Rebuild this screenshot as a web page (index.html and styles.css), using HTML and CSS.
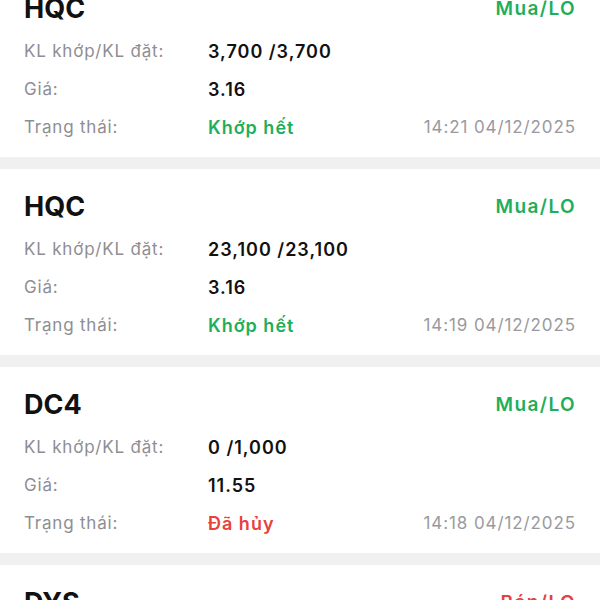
FILE: index.html
```html
<!DOCTYPE html>
<html lang="vi">
<head>
    <meta charset="UTF-8">
    <title>Sổ lệnh</title>
    <link rel="stylesheet" href="styles.css">
</head>
<body>
    <div id="orders">
        <div class="card">
            <div class="head">
                <span class="code">HQC</span>
                <span class="side buy">Mua/LO</span>
            </div>
            <div class="row">
                <span class="label">KL khớp/KL đặt:</span>
                <span class="value">3,700 /3,700</span>
            </div>
            <div class="row">
                <span class="label">Giá:</span>
                <span class="value">3.16</span>
            </div>
            <div class="row">
                <span class="label">Trạng thái:</span>
                <span class="value done">Khớp hết</span>
                <span class="time">14:21 04/12/2025</span>
            </div>
        </div>

        <div class="card">
            <div class="head">
                <span class="code">HQC</span>
                <span class="side buy">Mua/LO</span>
            </div>
            <div class="row">
                <span class="label">KL khớp/KL đặt:</span>
                <span class="value">23,100 /23,100</span>
            </div>
            <div class="row">
                <span class="label">Giá:</span>
                <span class="value">3.16</span>
            </div>
            <div class="row">
                <span class="label">Trạng thái:</span>
                <span class="value done">Khớp hết</span>
                <span class="time">14:19 04/12/2025</span>
            </div>
        </div>

        <div class="card">
            <div class="head">
                <span class="code">DC4</span>
                <span class="side buy">Mua/LO</span>
            </div>
            <div class="row">
                <span class="label">KL khớp/KL đặt:</span>
                <span class="value">0 /1,000</span>
            </div>
            <div class="row">
                <span class="label">Giá:</span>
                <span class="value">11.55</span>
            </div>
            <div class="row">
                <span class="label">Trạng thái:</span>
                <span class="value cancel">Đã hủy</span>
                <span class="time">14:18 04/12/2025</span>
            </div>
        </div>

        <div class="card">
            <div class="head">
                <span class="code">DYS</span>
                <span class="side sell">Bán/LO</span>
            </div>
            <div class="row">
                <span class="label">KL khớp/KL đặt:</span>
                <span class="value">0 /500</span>
            </div>
        </div>
    </div>
</body>
</html>
```

FILE: styles.css
```css
*
{
    margin: 0;
    padding: 0;
}

body
{
    background: #f0f0f0;
    font-family: Inter, "Noto Sans", sans-serif;
    overflow: hidden;
}

#orders
{
    margin-top: -29px;
}

.card
{
    background: #ffffff;
    padding: 21px 24px 11px;
    margin-bottom: 12px;
}

.head
{
    display: flex;
    justify-content: space-between;
    align-items: center;
    height: 32px;
    margin-bottom: 8px;
}
.code
{
    font-size: 27px;
    font-weight: 700;
    color: #111111;
}
.side
{
    font-size: 19px;
    font-weight: 600;
    letter-spacing: 1.4px;
}

.row
{
    display: grid;
    grid-template-columns: 184px 1fr auto;
    align-items: center;
    height: 38px;
}
.label
{
    font-size: 17px;
    color: #8e8e93;
    letter-spacing: 0.8px;
}
.value
{
    font-size: 18px;
    font-weight: 600;
    color: #111111;
    letter-spacing: 1px;
}
.time
{
    font-size: 17px;
    color: #9a9a9e;
    letter-spacing: 0.9px;
}

.buy, .row .done
{
    color: #1fae5b;
}
.sell, .row .cancel
{
    color: #e8413b;
}
```
